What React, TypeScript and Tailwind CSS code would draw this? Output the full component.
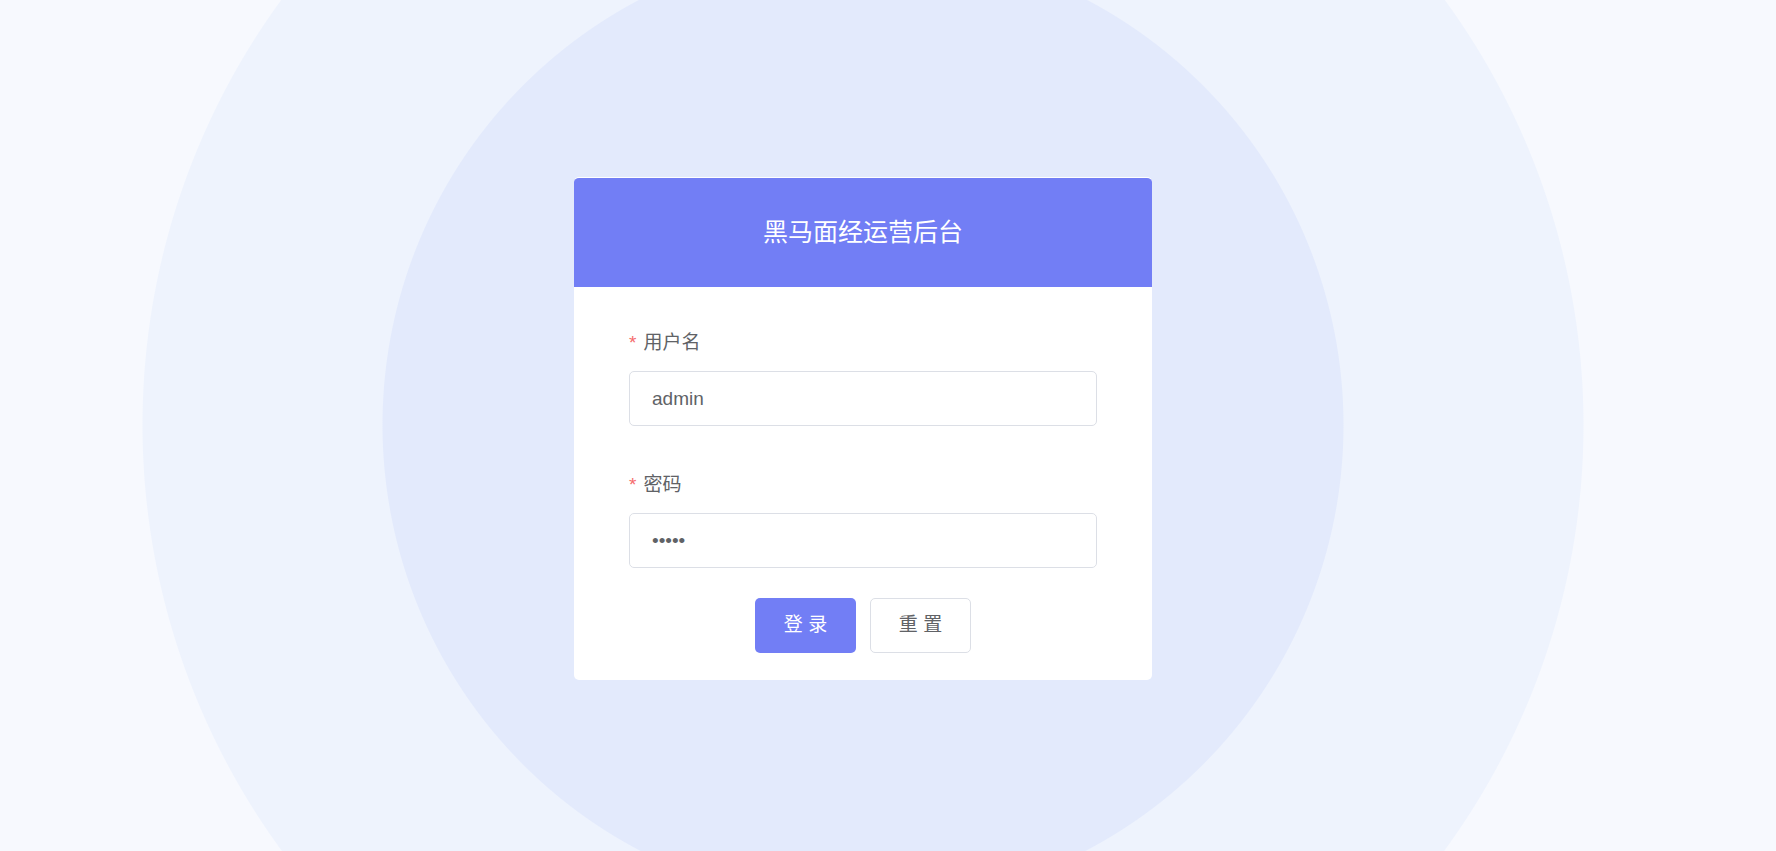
import React from "react";

const font = { fontFamily: '"Liberation Sans", "Noto Sans CJK SC", sans-serif' };

const Field = ({ label, type, value }: { label: string; type: string; value: string }) => (
  <div>
    <div className="flex h-[26px] items-center text-[19px] leading-[26px] text-[#606266]">
      <span className="mr-[7px] text-[#f56c6c]">*</span>
      {label}
    </div>
    <input
      type={type}
      value={value}
      readOnly
      className="mt-[15px] block h-[55px] w-full rounded-[5px] border border-[#dcdfe6] bg-white pl-[22px] text-[19px] text-[#606266] outline-none"
      style={font}
    />
  </div>
);

export default function App() {
  return (
    <div
      className="flex h-[851px] w-full items-center justify-center bg-[radial-gradient(circle_at_863px_425px,#e3eafc_480px,#eef3fd_481px,#eef3fd_720px,#f7f9fe_721px)] pr-[50px] pt-[6px]"
      style={font}
    >
      <div className="w-[578px] overflow-hidden rounded-[5px] border-t border-white bg-white">
        {/* Header */}
        <div className="flex h-[109px] items-center justify-center bg-[#727ef5] text-[25px] text-white">
          黑马面经运营后台
        </div>

        {/* Form */}
        <div className="px-[55px] pb-[27px] pt-[43px]">
          <Field label="用户名" type="text" value="admin" />
          <div className="h-[46px]" />
          <Field label="密码" type="password" value="admin" />

          <div className="mt-[30px] flex justify-center gap-[14px]">
            <button className="h-[55px] w-[101px] rounded-[5px] bg-[#727ef5] text-[19px] text-white">
              登 录
            </button>
            <button className="h-[55px] w-[101px] rounded-[5px] border border-[#dcdfe6] bg-white text-[19px] text-[#606266]">
              重 置
            </button>
          </div>
        </div>
      </div>
    </div>
  );
}
